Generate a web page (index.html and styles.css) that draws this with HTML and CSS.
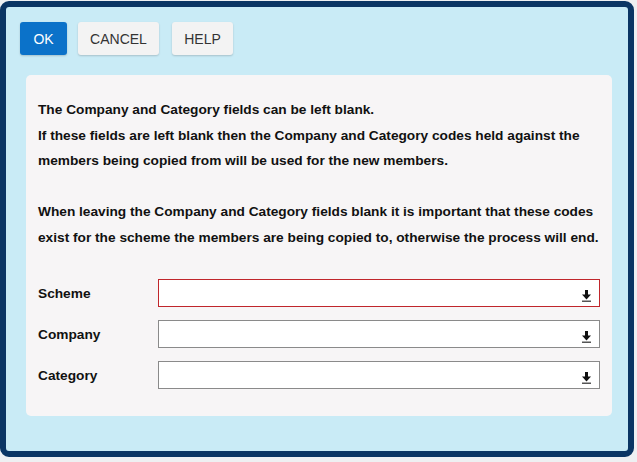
FILE: index.html
```html
<!DOCTYPE html>
<html>
<head>
<meta charset="utf-8">
<link rel="stylesheet" href="styles.css">
</head>
<body>
<div class="frame">
  <div class="toolbar">
    <button class="btn btn-primary">OK</button>
    <button class="btn btn-cancel">CANCEL</button>
    <button class="btn btn-help">HELP</button>
  </div>
  <div class="panel">
    <p class="msg">The Company and Category fields can be left blank.<br>If these fields are left blank then the Company and Category codes held against the members being copied from will be used for the new members.</p>
    <p class="msg">When leaving the Company and Category fields blank it is important that these codes exist for the scheme the members are being copied to, otherwise the process will end.</p>
    <div class="form">
      <div class="row">
        <label class="lbl">Scheme</label>
        <div class="field field-error">
          <svg class="dl" width="9" height="12" viewBox="0 0 9 12"><rect x="3" y="0" width="3" height="5" fill="#111"/><polygon points="0,4.5 9,4.5 4.5,9.5" fill="#111"/><rect x="0" y="10.5" width="9" height="1.5" fill="#555"/></svg>
        </div>
      </div>
      <div class="row">
        <label class="lbl">Company</label>
        <div class="field">
          <svg class="dl" width="9" height="12" viewBox="0 0 9 12"><rect x="3" y="0" width="3" height="5" fill="#111"/><polygon points="0,4.5 9,4.5 4.5,9.5" fill="#111"/><rect x="0" y="10.5" width="9" height="1.5" fill="#555"/></svg>
        </div>
      </div>
      <div class="row">
        <label class="lbl">Category</label>
        <div class="field">
          <svg class="dl" width="9" height="12" viewBox="0 0 9 12"><rect x="3" y="0" width="3" height="5" fill="#111"/><polygon points="0,4.5 9,4.5 4.5,9.5" fill="#111"/><rect x="0" y="10.5" width="9" height="1.5" fill="#555"/></svg>
        </div>
      </div>
    </div>
  </div>
</div>
</body>
</html>
```
FILE: styles.css
```css
html, body {
  margin: 0;
  padding: 0;
  background: #eef0f2;
}
body {
  font-family: "Liberation Sans", Arial, sans-serif;
  width: 637px;
  height: 462px;
  overflow: hidden;
}
.frame {
  box-sizing: border-box;
  margin-top: 1px;
  width: 634px;
  height: 456px;
  border: 6px solid #0a3564;
  border-radius: 9px;
  background: #c9ebf6;
  padding: 15px 16px 0 14px;
}
.toolbar {
  display: flex;
  gap: 11px;
  height: 33px;
}
.btn {
  font-family: "Liberation Sans", Arial, sans-serif;
  font-size: 14px;
  color: #333;
  background: #f3f3f3;
  border: none;
  border-radius: 3px;
  box-shadow: 0 1px 2px rgba(0,0,0,0.18);
  padding: 0;
  height: 33px;
  cursor: pointer;
}
.btn-primary {
  background: #0b72c9;
  color: #fff;
  width: 47px;
}
.btn-cancel { width: 81px; }
.btn-help { width: 61px; margin-left: 2px; }
.panel {
  margin: 20px 0 0 6px;
  height: 341px;
  box-sizing: border-box;
  background: #f7f5f6;
  border-radius: 5px;
  padding: 22px 12px 0 12px;
}
.msg {
  margin: 0 0 25.5px 0;
  font-size: 13.7px;
  font-weight: bold;
  line-height: 25.5px;
  color: #111;
}
.msg + .msg { margin-bottom: 0; }
.form {
  margin-top: 29px;
  display: flex;
  flex-direction: column;
  gap: 13px;
}
.row {
  display: flex;
  align-items: center;
  height: 28px;
}
.lbl {
  width: 120px;
  font-size: 13.7px;
  font-weight: bold;
  color: #111;
}
.field {
  flex: 1;
  box-sizing: border-box;
  height: 28px;
  background: #fff;
  border: 1px solid #8a8a8a;
  display: flex;
  align-items: center;
  justify-content: flex-end;
  padding-right: 8px;
  padding-top: 5px;
}
.field-error {
  border-color: #c0262b;
}
.dl {
  display: block;
}
```
